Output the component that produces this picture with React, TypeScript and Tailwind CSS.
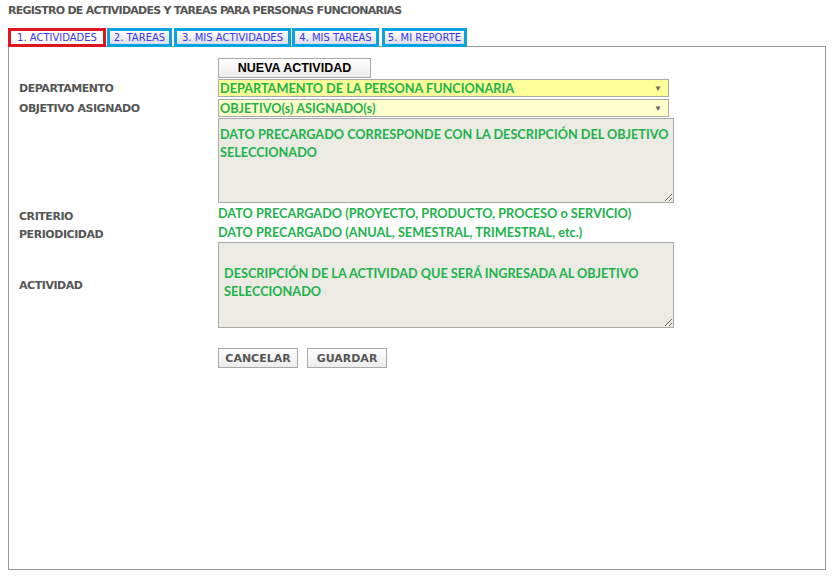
import React from "react";

const tabs = [
  { label: "1. ACTIVIDADES", active: true, cls: "w-[98px]" },
  { label: "2. TAREAS", cls: "w-[65px] ml-[1px]" },
  { label: "3. MIS ACTIVIDADES", cls: "w-[117px] ml-[2px]" },
  { label: "4. MIS TAREAS", cls: "w-[87px] ml-[1px]" },
  { label: "5. MI REPORTE", cls: "w-[85px] ml-[3px]" },
];

const labelCls =
  "font-['DejaVu_Sans',sans-serif] font-bold text-[11px] text-[#555] tracking-[-0.45px]";
const greenCls =
  "font-['Lato',sans-serif] font-bold text-[12.7px] text-[#21b24b] leading-[18px]";
const btnCls =
  "h-[20px] border border-[#a9a9a9] bg-gradient-to-b from-white to-[#ececec] leading-none";

function FakeSelect({ text, bg }: { text: string; bg: string }) {
  return (
    <div
      className={`w-[451px] h-[18px] border border-[#a9a9a9] ${bg} flex items-center justify-between pl-[1px] pr-[6px]`}
    >
      <span className={greenCls}>{text}</span>
      <span className="text-[8px] text-[#666] leading-none">▼</span>
    </div>
  );
}

export default function App() {
  return (
    <div className="w-[837px] h-[577px] bg-white px-2 pt-[4px]">
      {/* Título */}
      <h1 className="font-['DejaVu_Sans',sans-serif] font-bold text-[11px] text-[#555] tracking-[-0.75px] leading-[14px] mb-[10px]">
        REGISTRO DE ACTIVIDADES Y TAREAS PARA PERSONAS FUNCIONARIAS
      </h1>

      {/* Pestañas */}
      <div className="flex items-end relative z-10 -mb-px">
        {tabs.map((t) => (
          <div
            key={t.label}
            className={`${t.cls} h-[19px] border-[3px] flex items-center justify-center ${
              t.active
                ? "border-[#e0161e] bg-white"
                : "border-[#0aa3e0] bg-gradient-to-b from-white to-[#dcdcf0]"
            }`}
          >
            <span className="font-['DejaVu_Sans',sans-serif] text-[10px] text-[#3535ef] leading-none whitespace-nowrap">
              {t.label}
            </span>
          </div>
        ))}
      </div>

      {/* Panel */}
      <div className="w-[818px] h-[524px] border border-[#999] pl-[10px] pt-[11px]">
        <div className="grid grid-cols-[199px_1fr] gap-y-[1px] items-center">
          <div />
          <div className="flex">
            <button
              className={`${btnCls} w-[153px] font-['Liberation_Sans',sans-serif] font-bold text-[12.5px] text-black`}
            >
              NUEVA ACTIVIDAD
            </button>
          </div>

          <div className={`${labelCls} pt-[2px]`}>DEPARTAMENTO</div>
          <FakeSelect text="DEPARTAMENTO DE LA PERSONA FUNCIONARIA" bg="bg-[#ffff99]" />

          <div className={`${labelCls} pt-[2px]`}>OBJETIVO ASIGNADO</div>
          <FakeSelect text="OBJETIVO(s) ASIGNADO(s)" bg="bg-[#ffffcc]" />

          <div />
          <textarea
            readOnly
            defaultValue="DATO PRECARGADO CORRESPONDE CON LA DESCRIPCIÓN DEL OBJETIVO SELECCIONADO"
            className={`block w-[456px] h-[85px] border border-[#a9a9a9] bg-[#ebebe4] pl-[1px] pr-0 pt-[6px] resize outline-none ${greenCls}`}
          />

          <div className={`${labelCls} self-end -mb-[3px]`}>CRITERIO</div>
          <div className={greenCls}>
            DATO PRECARGADO (PROYECTO, PRODUCTO, PROCESO o SERVICIO)
          </div>

          <div className={`${labelCls} self-end -mb-[2px]`}>PERIODICIDAD</div>
          <div className={greenCls}>
            DATO PRECARGADO (ANUAL, SEMESTRAL, TRIMESTRAL, etc.)
          </div>

          <div className={`${labelCls} pt-[3px]`}>ACTIVIDAD</div>
          <textarea
            readOnly
            defaultValue={"\nDESCRIPCIÓN DE LA ACTIVIDAD QUE SERÁ INGRESADA AL OBJETIVO SELECCIONADO"}
            className={`block w-[456px] h-[86px] border border-[#a9a9a9] bg-[#ebebe4] pl-[5px] pr-0 pt-[3px] resize outline-none ${greenCls}`}
          />

          <div />
          <div className="flex gap-[9px] mt-[19px]">
            <button
              className={`${btnCls} w-[80px] font-['DejaVu_Sans',sans-serif] font-bold text-[11px] text-[#555]`}
            >
              CANCELAR
            </button>
            <button
              className={`${btnCls} w-[80px] font-['DejaVu_Sans',sans-serif] font-bold text-[11px] text-[#555]`}
            >
              GUARDAR
            </button>
          </div>
        </div>
      </div>
    </div>
  );
}
